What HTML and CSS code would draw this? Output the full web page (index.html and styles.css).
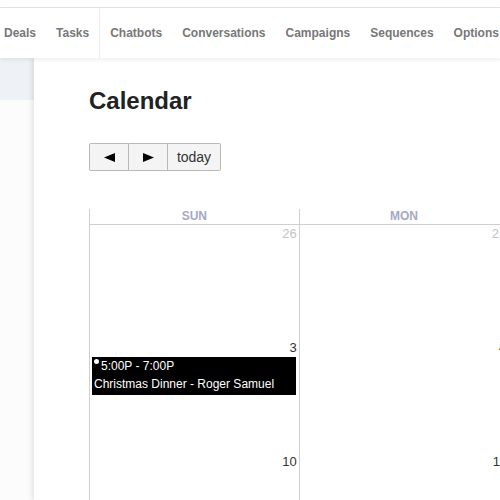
FILE: index.html
```html
<!DOCTYPE html>
<html lang="en">
<head>
  <meta charset="UTF-8" />
  <title>Calendar</title>
  <link rel="stylesheet" href="styles.css">
</head>
<body>

  <!-- Top navigation -->
  <div class="topbar">
    <ul class="nav">
      <li class="nav-item">Deals</li>
      <li class="nav-item">Tasks</li>
      <li class="nav-item nav-split">Chatbots</li>
      <li class="nav-item">Conversations</li>
      <li class="nav-item">Campaigns</li>
      <li class="nav-item">Sequences</li>
      <li class="nav-item">Options</li>
    </ul>
  </div>

  <div class="layout">
    <!-- Sidebar -->
    <div class="sidebar">
      <div class="side-active"></div>
    </div>

    <!-- Main -->
    <div class="main">
      <h1>Calendar</h1>

      <div class="btn-group">
        <button class="btn btn-arrow">
          <svg width="11" height="9" viewBox="0 0 11 9"><polygon points="0,4.5 11,0 11,9" fill="#000"/></svg>
        </button>
        <button class="btn btn-arrow">
          <svg width="11" height="9" viewBox="0 0 11 9"><polygon points="11,4.5 0,0 0,9" fill="#000"/></svg>
        </button>
        <button class="btn btn-today">today</button>
      </div>

      <table class="calendar">
        <thead>
          <tr>
            <th>Sun</th>
            <th>Mon</th>
            <th>Tue</th>
            <th>Wed</th>
            <th>Thu</th>
            <th>Fri</th>
            <th>Sat</th>
          </tr>
        </thead>
        <tbody>
          <tr>
            <td><div class="day other">26</div></td>
            <td><div class="day other">27</div></td>
            <td><div class="day other">28</div></td>
            <td><div class="day other">29</div></td>
            <td><div class="day other">30</div></td>
            <td><div class="day">1</div></td>
            <td><div class="day">2</div></td>
          </tr>
          <tr>
            <td>
              <div class="day">3</div>
              <div class="event">
                <div class="event-time"><span class="event-dot"></span>5:00P - 7:00P</div>
                <div class="event-title">Christmas Dinner - Roger Samuel</div>
              </div>
            </td>
            <td><div class="day">4</div></td>
            <td><div class="day">5</div></td>
            <td><div class="day">6</div></td>
            <td><div class="day">7</div></td>
            <td><div class="day">8</div></td>
            <td><div class="day">9</div></td>
          </tr>
          <tr>
            <td><div class="day">10</div></td>
            <td><div class="day">11</div></td>
            <td><div class="day">12</div></td>
            <td><div class="day">13</div></td>
            <td><div class="day">14</div></td>
            <td><div class="day">15</div></td>
            <td><div class="day">16</div></td>
          </tr>
        </tbody>
      </table>
    </div>
  </div>

</body>
</html>
```

FILE: styles.css
```css
html, body {
  margin: 0;
  padding: 0;
  background: #fff;
  font-family: 'Liberation Sans', Arial, sans-serif;
  color: #333;
  overflow: hidden;
  height: 500px;
}

.topbar {
  margin-top: 7px;
  border-top: 1px solid #e2e2e2;
  height: 50px;
  background: #fff;
  box-shadow: 0 2px 4px rgba(0, 0, 0, 0.07);
  position: relative;
  z-index: 2;
  white-space: nowrap;
  overflow: hidden;
}

.nav {
  list-style: none;
  margin: 0;
  padding: 0;
  display: flex;
  height: 100%;
}

.nav-item {
  padding: 0 10px;
  display: flex;
  align-items: center;
  font-size: 12px;
  font-weight: bold;
  color: #777;
}

.nav-item:first-child {
  padding-left: 4px;
}

.nav-split {
  border-left: 1px solid #ececec;
}

.layout {
  display: flex;
  height: 442px;
}

.sidebar {
  width: 34px;
  flex-shrink: 0;
  background: #fcfcfc;
}

.side-active {
  height: 42px;
  background: #eef1f5;
}

.main {
  flex: 1;
  min-width: 0;
  background: #fff;
  padding: 29px 0 0 55px;
  box-shadow: -2px 0 5px rgba(0, 0, 0, 0.1);
  position: relative;
  z-index: 1;
}

h1 {
  margin: 0;
  font-size: 24px;
  line-height: 28px;
  font-weight: bold;
  color: #222;
}

.btn-group {
  display: flex;
  margin-top: 28px;
}

.btn {
  height: 28px;
  border: 1px solid #b9b9b9;
  background: #f4f4f4;
  font-family: 'Liberation Sans', Arial, sans-serif;
  font-size: 14px;
  color: #333;
  margin: 0;
  display: flex;
  align-items: center;
  justify-content: center;
  border-radius: 0;
}

.btn + .btn {
  border-left: none;
}

.btn:first-child {
  border-radius: 2px 0 0 2px;
}

.btn:last-child {
  border-radius: 0 2px 2px 0;
}

.btn-arrow {
  width: 40px;
  padding: 0;
}

.btn-arrow:nth-child(2) {
  width: 39px;
}

.btn-today {
  width: 53px;
  padding: 0 8px;
}

.calendar {
  margin-top: 38px;
  border-collapse: collapse;
  table-layout: fixed;
  width: 1468px;
}

.calendar th {
  height: 15px;
  padding: 0;
  font-size: 12px;
  line-height: 15px;
  font-weight: bold;
  text-transform: uppercase;
  color: #a4a9c4;
  border-left: 1px solid #cfcfcf;
  border-bottom: 1px solid #cfcfcf;
}

.calendar td {
  height: 114px;
  padding: 0;
  vertical-align: top;
  border-left: 1px solid #cfcfcf;
}

.day {
  text-align: right;
  font-size: 13px;
  line-height: 15px;
  padding: 1px 2px 0 0;
  color: #333;
}

.day.other {
  color: #c2c2c2;
}

.event {
  margin: 2px 3px 0 2px;
  background: #000;
  color: #fff;
  font-size: 12px;
  line-height: 18px;
  padding: 0 0 2px 2px;
}

.event-dot {
  display: inline-block;
  width: 5px;
  height: 5px;
  border-radius: 50%;
  background: #fff;
  margin: 0 2px 0 0;
  vertical-align: 6px;
}

.event-title {
  white-space: nowrap;
}
```
